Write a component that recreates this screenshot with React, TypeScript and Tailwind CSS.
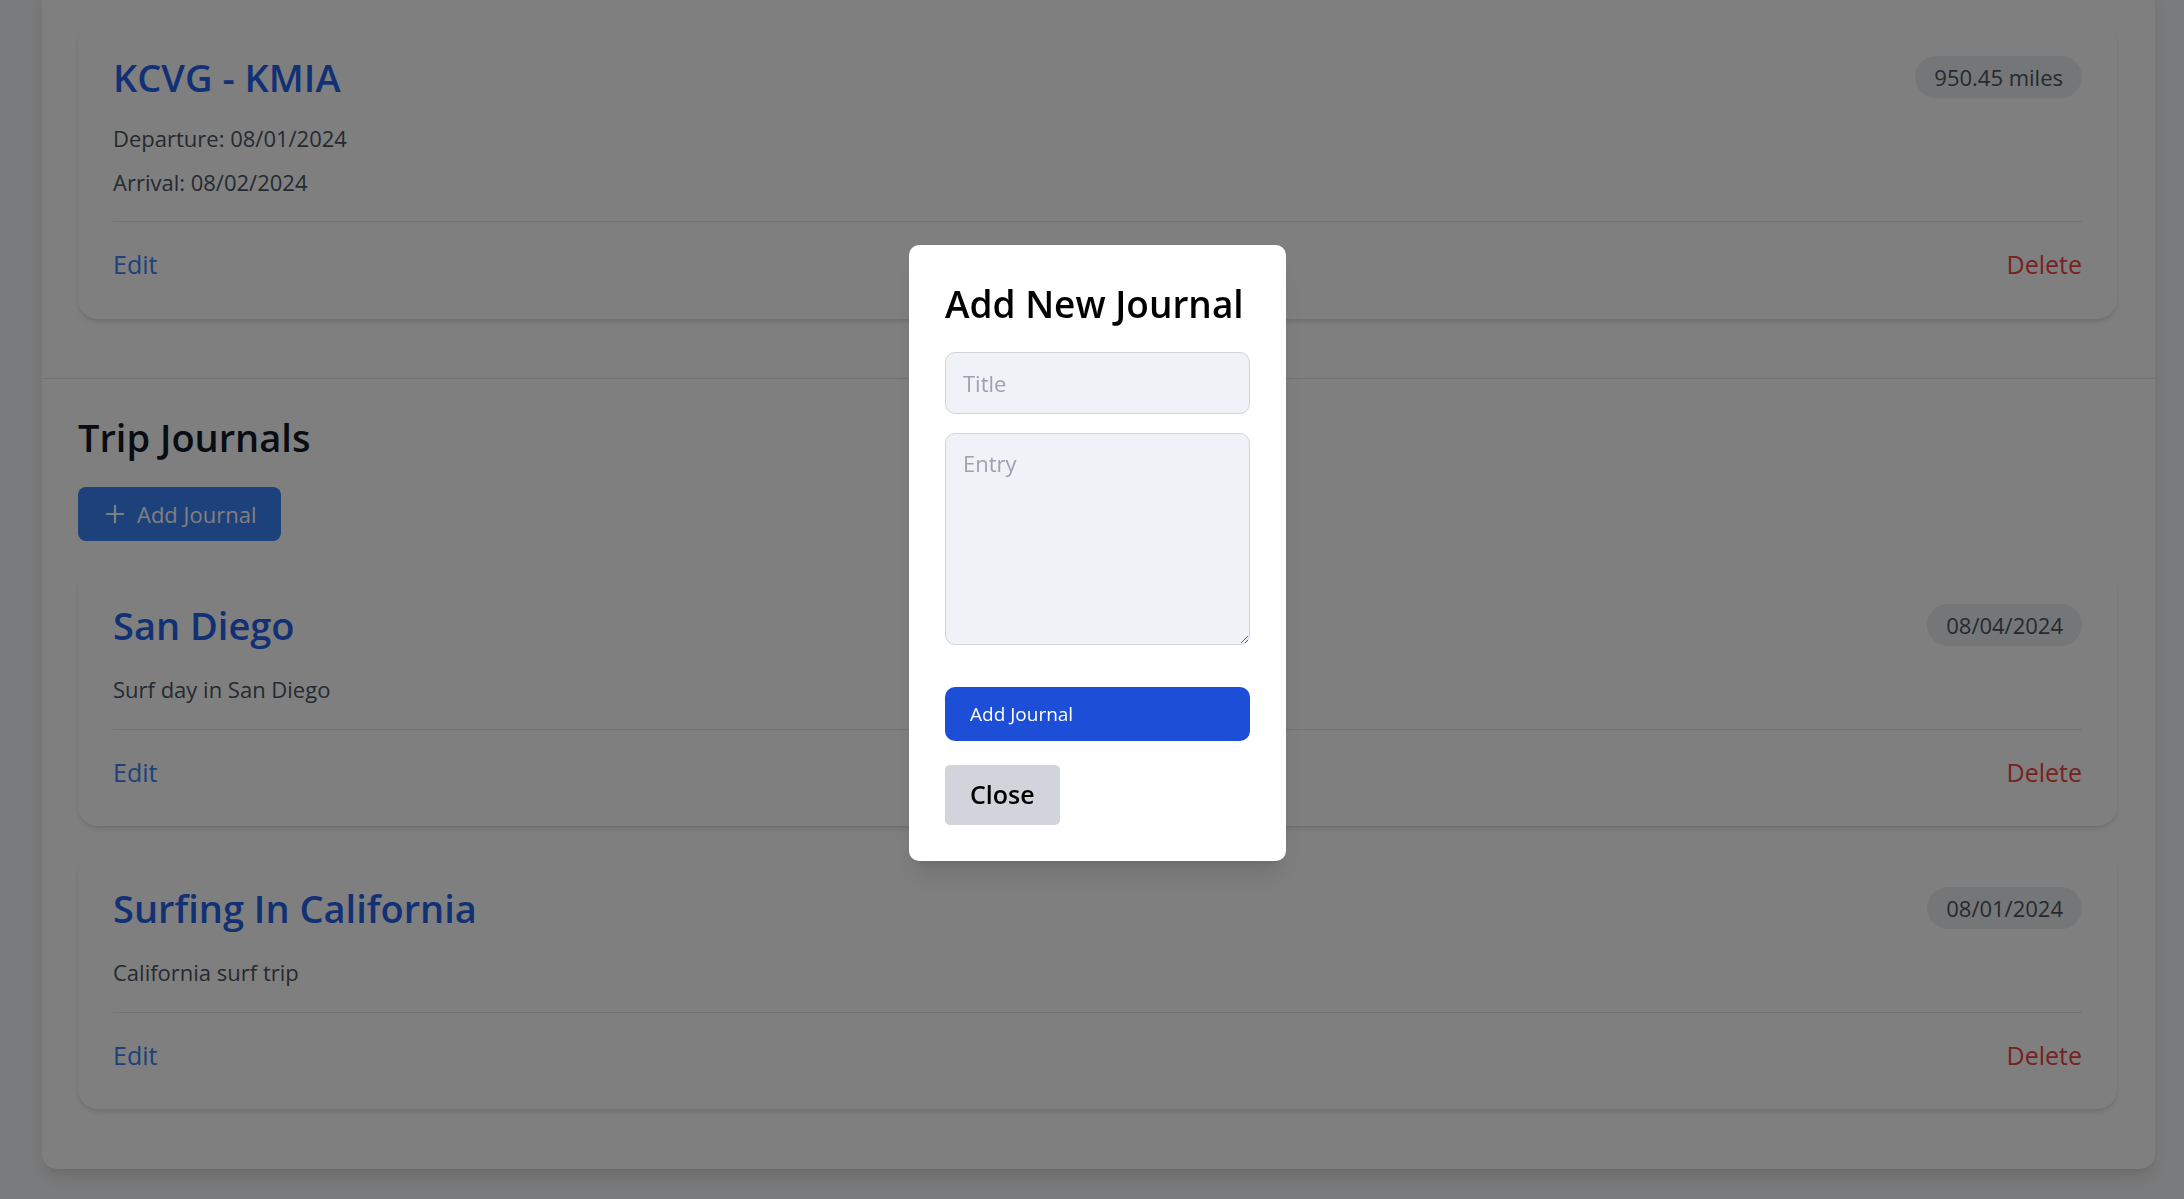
import { Plus } from "lucide-react";

type TJournalProps = {
    title: string;
    date: string;
    entry: string;
};

function Actions() {
    return (
        <div className="border-t border-[#e5e7eb] pt-[24px] flex justify-between items-center text-[25px] leading-[36px]">
            <button className="text-[#3b82f6]">Edit</button>
            <button className="text-[#ef4444]">Delete</button>
        </div>
    );
}

function Badge({ text }: { text: string }) {
    return (
        <span className="rounded-full bg-[#eaecef] px-[19px] py-[6px] text-[22px] leading-[30px] text-[#4b5563]">
            {text}
        </span>
    );
}

function FlightCard() {
    return (
        <div className="bg-white rounded-[20px] shadow-md p-[35px] pb-[37px]">
            <div className="flex justify-between items-center">
                <h3 className="text-[38px] leading-[42px] font-semibold text-[#2563eb]">
                    KCVG - KMIA
                </h3>
                <Badge text="950.45 miles" />
            </div>
            <div className="mt-[25px] mb-[24px] text-[22px] leading-[30px] text-[#4b5563]">
                <p className="mb-[14px]">Departure: 08/01/2024</p>
                <p>Arrival: 08/02/2024</p>
            </div>
            <Actions />
        </div>
    );
}

function JournalCard({ title, date, entry }: TJournalProps) {
    return (
        <div className="bg-white rounded-[20px] shadow-md p-[35px] pb-[36px]">
            <div className="flex justify-between items-center">
                <h3 className="text-[38px] leading-[42px] font-semibold text-[#2563eb]">
                    {title}
                </h3>
                <Badge text={date} />
            </div>
            <p className="mt-[28px] mb-[25px] text-[22px] leading-[30px] text-[#4b5563]">
                {entry}
            </p>
            <Actions />
        </div>
    );
}

const journals: TJournalProps[] = [
    { title: "San Diego", date: "08/04/2024", entry: "Surf day in San Diego" },
    {
        title: "Surfing In California",
        date: "08/01/2024",
        entry: "California surf trip",
    },
];

function JournalModal() {
    return (
        <div className="fixed inset-0 bg-black/50 flex justify-center items-start pt-[245px] pl-[11px]">
            <div className="w-[377px] bg-white rounded-[10px] p-[36px] shadow-xl">
                <h2 className="whitespace-nowrap text-[37px] leading-[45px] font-semibold text-black mb-[26px]">
                    Add New Journal
                </h2>
                <input
                    type="text"
                    placeholder="Title"
                    className="block w-full h-[62px] rounded-[10px] border border-[#d1d5db] bg-[#eff2f7] px-[17px] text-[22px] placeholder:text-[#9ca3af] mb-[19px]"
                />
                <textarea
                    placeholder="Entry"
                    className="block w-full h-[212px] rounded-[10px] border border-[#d1d5db] bg-[#eff2f7] px-[17px] py-[14px] text-[22px] leading-[30px] placeholder:text-[#9ca3af] mb-[42px]"
                />
                <button className="block w-full h-[54px] rounded-[10px] bg-[#1d4ed8] text-white text-left pl-[25px] text-[19px] font-medium mb-[24px]">
                    Add Journal
                </button>
                <button className="h-[60px] px-[25px] rounded-[5px] bg-[#d1d5db] text-black text-[25px] font-semibold">
                    Close
                </button>
            </div>
        </div>
    );
}

export default function App() {
    return (
        <div className="min-h-screen bg-[#f3f4f6] pl-[42px] pr-[29px] pb-[31px] font-['Open_Sans',sans-serif]">
            <div className="-mt-[14px] bg-white rounded-[15px] shadow-lg">
                <section className="pl-[36px] pr-[38px] pt-[35px] pb-[59px] border-b border-[#e5e7eb]">
                    <FlightCard />
                </section>
                <section className="pl-[36px] pr-[38px] pt-[36px] pb-[60px]">
                    <h2 className="text-[38px] leading-[45px] font-semibold text-[#111827] mb-[27px]">
                        Trip Journals
                    </h2>
                    <button className="h-[54px] flex items-center gap-[8px] rounded-[8px] bg-[#3b82f6] text-white pl-[23px] pr-[25px] text-[22px] mb-[28px]">
                        <Plus size={28} strokeWidth={1.9} />
                        Add Journal
                    </button>
                    <div className="flex flex-col gap-[26px]">
                        {journals.map((data) => (
                            <JournalCard key={data.title} {...data} />
                        ))}
                    </div>
                </section>
            </div>
            <JournalModal />
        </div>
    );
}
